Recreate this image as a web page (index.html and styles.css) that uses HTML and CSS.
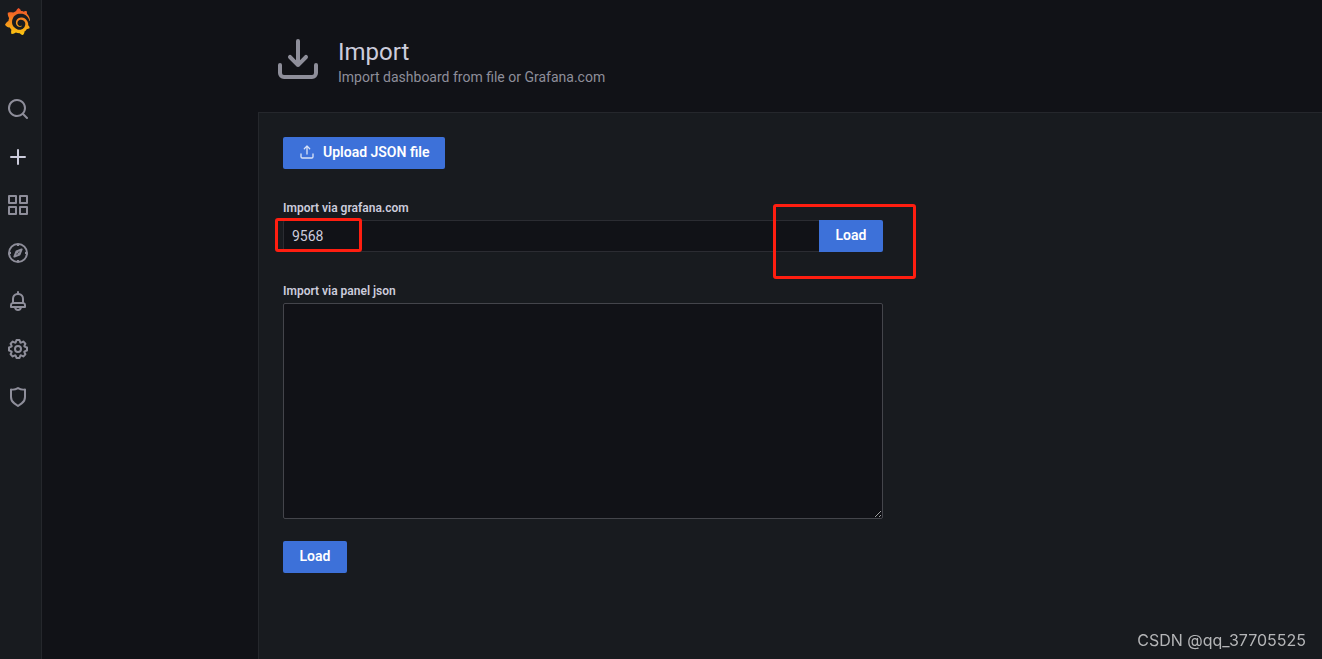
FILE: index.html
```html
<!DOCTYPE html>
<html lang="en">
<head>
<meta charset="utf-8">
<title>Import - Grafana</title>
<link rel="stylesheet" href="styles.css">
</head>
<body>
<div class="app">
  <nav class="sidebar" aria-label="Main menu">
    <a class="logo" href="#" aria-label="Home">
      <svg viewBox="0 0 24 24" width="27" height="27">
        <defs><linearGradient id="flame" x1="0" y1="1" x2="0" y2="0"><stop offset="0" stop-color="#fbc810"/><stop offset="1" stop-color="#f0502a"/></linearGradient></defs>
        <path fill="url(#flame)" d="M23.02 10.59a8.578 8.578 0 0 0-.862-3.034 8.911 8.911 0 0 0-1.789-2.445c.337-1.342-.413-2.505-.413-2.505-1.292-.08-2.113.4-2.416.62-.052-.02-.102-.044-.154-.064-.22-.089-.446-.172-.677-.247-.231-.073-.47-.14-.711-.197a9.867 9.867 0 0 0-.875-.161C14.557.753 12.94 0 12.94 0c-1.804 1.145-2.147 2.744-2.147 2.744l-.018.093c-.098.029-.2.057-.298.088-.138.042-.275.094-.413.143-.138.055-.275.107-.41.166a8.869 8.869 0 0 0-1.557.87l-.063-.029c-2.497-.955-4.716.195-4.716.195-.203 2.658.996 4.33 1.235 4.636a11.608 11.608 0 0 0-.607 2.635C1.636 12.677.953 15.014.953 15.014c1.926 2.214 4.171 2.351 4.171 2.351.003-.002.006-.002.006-.005.285.509.615.994.986 1.446.156.19.32.371.488.548-.704 2.009.099 3.68.099 3.68 2.144.08 3.553-.937 3.849-1.173a9.784 9.784 0 0 0 3.164.501h.08l.055-.003.107-.002.103-.005.003.002c1.01 1.44 2.788 1.646 2.788 1.646 1.264-1.332 1.337-2.653 1.337-2.94v-.058c0-.02-.003-.039-.003-.06.265-.187.52-.387.758-.6a7.875 7.875 0 0 0 1.415-1.7c1.43.083 2.437-.885 2.437-.885-.236-1.49-1.085-2.216-1.264-2.354l-.018-.013-.016-.013a.217.217 0 0 1-.031-.02c.008-.092.016-.18.02-.27.011-.162.016-.323.016-.48v-.253l-.005-.098-.008-.135a1.891 1.891 0 0 0-.01-.13c-.003-.042-.008-.083-.013-.125l-.016-.124-.018-.122a6.215 6.215 0 0 0-2.032-3.73 6.015 6.015 0 0 0-3.222-1.46 6.292 6.292 0 0 0-.85-.048l-.107.002h-.063l-.044.003-.104.008a4.777 4.777 0 0 0-3.335 1.695c-.332.4-.592.84-.768 1.297a4.594 4.594 0 0 0-.312 1.817l.003.091c.005.055.007.11.013.164a3.615 3.615 0 0 0 .698 1.82 3.53 3.53 0 0 0 1.827 1.282c.33.098.66.14.971.137.039 0 .078 0 .114-.002l.063-.003c.02 0 .041-.003.062-.003.034-.002.065-.007.099-.01.007 0 .018-.003.028-.003l.031-.005.06-.008a1.18 1.18 0 0 0 .112-.02c.036-.008.072-.013.109-.024a2.634 2.634 0 0 0 .914-.415c.028-.02.056-.041.085-.065a.248.248 0 0 0 .039-.35.244.244 0 0 0-.309-.06l-.078.042c-.09.044-.184.083-.283.116a2.476 2.476 0 0 1-.475.096c-.028.003-.054.006-.083.006l-.083.002c-.026 0-.054 0-.08-.002l-.102-.006h-.012l-.024.006c-.016-.003-.031-.003-.044-.006-.031-.002-.06-.007-.091-.01a2.59 2.59 0 0 1-.724-.213 2.557 2.557 0 0 1-.667-.438 2.52 2.52 0 0 1-.805-1.475 2.306 2.306 0 0 1-.029-.444l.006-.122v-.023l.002-.031c.003-.021.003-.04.005-.06a3.163 3.163 0 0 1 1.352-2.29 3.12 3.12 0 0 1 .937-.43 2.946 2.946 0 0 1 .776-.101h.06l.07.002.045.003h.026l.07.005a4.041 4.041 0 0 1 1.635.49 3.94 3.94 0 0 1 1.602 1.662 3.77 3.77 0 0 1 .397 1.414l.005.076.003.075c.002.026.002.05.002.075 0 .024.003.052 0 .07v.065l-.002.073-.008.174a6.195 6.195 0 0 1-.08.639 5.1 5.1 0 0 1-.267.927 5.31 5.31 0 0 1-.624 1.13 5.052 5.052 0 0 1-3.237 2.014 4.82 4.82 0 0 1-.649.066l-.039.003h-.287a6.607 6.607 0 0 1-1.716-.265 6.776 6.776 0 0 1-3.4-2.274 6.75 6.75 0 0 1-.746-1.15 6.616 6.616 0 0 1-.714-2.596l-.005-.083-.002-.02v-.056l-.003-.073v-.096l-.003-.104v-.07l.003-.163c.008-.22.026-.45.054-.678a8.707 8.707 0 0 1 .28-1.355c.128-.444.286-.872.473-1.277a7.04 7.04 0 0 1 1.456-2.1 5.925 5.925 0 0 1 .953-.763c.169-.111.343-.213.524-.306.089-.05.182-.091.273-.135.047-.02.093-.042.138-.062a7.177 7.177 0 0 1 .714-.267l.145-.045c.049-.015.098-.026.148-.041.098-.029.197-.052.296-.076.049-.013.1-.02.15-.033l.15-.032.151-.028.076-.013.075-.01.153-.024c.057-.01.114-.013.171-.023l.169-.021c.036-.003.073-.008.106-.01l.073-.008.036-.003.042-.002c.057-.003.114-.008.171-.01l.086-.006h.023l.037-.003.145-.007a7.999 7.999 0 0 1 1.708.125 7.917 7.917 0 0 1 2.048.68 8.253 8.253 0 0 1 1.672 1.09l.09.077.089.078c.06.052.114.107.171.159.057.052.112.106.166.16.052.055.107.107.159.164a8.671 8.671 0 0 1 1.41 1.978c.012.026.028.052.04.078l.04.078.075.156c.023.051.05.1.07.153l.065.15a8.848 8.848 0 0 1 .45 1.34.19.19 0 0 0 .201.142.186.186 0 0 0 .172-.184c.01-.246.002-.532-.024-.856z"/>
      </svg>
    </a>
    <a class="nav-item" href="#" aria-label="Search"><svg class="icon" viewBox="0 0 24 24"><path d="M21.71,20.29,18,16.61A9,9,0,1,0,16.61,18l3.68,3.68a1,1,0,0,0,1.42,0A1,1,0,0,0,21.71,20.29ZM11,18a7,7,0,1,1,7-7A7,7,0,0,1,11,18Z"/></svg></a>
    <a class="nav-item nav-item-active" href="#" aria-label="Create"><svg class="icon" viewBox="0 0 24 24"><path d="M19,11H13V5a1,1,0,0,0-2,0v6H5a1,1,0,0,0,0,2h6v6a1,1,0,0,0,2,0V13h6a1,1,0,0,0,0-2Z"/></svg></a>
    <a class="nav-item" href="#" aria-label="Dashboards"><svg class="icon icon-line" viewBox="0 0 24 24"><rect x="3" y="3" width="7" height="7"/><rect x="14" y="3" width="7" height="7"/><rect x="3" y="14" width="7" height="7"/><rect x="14" y="14" width="7" height="7"/></svg></a>
    <a class="nav-item" href="#" aria-label="Explore"><svg class="icon icon-line" viewBox="0 0 24 24"><circle cx="12" cy="12" r="9"/><path d="M12 3v2M12 19v2M3 12h2M19 12h2M15.6 8.4l-5.1 2.1-2.1 5.1 5.1-2.1zM11.5 12.5l1-1"/></svg></a>
    <a class="nav-item" href="#" aria-label="Alerting"><svg class="icon" viewBox="0 0 24 24"><path d="M18,13.18V10a6,6,0,0,0-5-5.91V3a1,1,0,0,0-2,0V4.09A6,6,0,0,0,6,10v3.18A3,3,0,0,0,4,16v2a1,1,0,0,0,1,1H8.14a4,4,0,0,0,7.72,0H19a1,1,0,0,0,1-1V16A3,3,0,0,0,18,13.18ZM8,10a4,4,0,0,1,8,0v3H8Zm4,10a2,2,0,0,1-1.72-1h3.44A2,2,0,0,1,12,20Zm6-3H6V16a1,1,0,0,1,1-1H17a1,1,0,0,1,1,1Z"/></svg></a>
    <a class="nav-item" href="#" aria-label="Configuration"><svg class="icon" viewBox="0 0 24 24"><path d="M21.32,9.55l-1.89-.63.89-1.78A1,1,0,0,0,20.13,6L18,3.87a1,1,0,0,0-1.15-.19l-1.78.89-.63-1.89A1,1,0,0,0,13.5,2h-3a1,1,0,0,0-.95.68L8.92,4.57,7.14,3.68A1,1,0,0,0,6,3.87L3.87,6a1,1,0,0,0-.19,1.15l.89,1.78-1.89.63A1,1,0,0,0,2,10.5v3a1,1,0,0,0,.68.95l1.89.63-.89,1.78A1,1,0,0,0,3.87,18L6,20.13a1,1,0,0,0,1.15.19l1.78-.89.63,1.89a1,1,0,0,0,.95.68h3a1,1,0,0,0,.95-.68l.63-1.89,1.78.89A1,1,0,0,0,18,20.13L20.13,18a1,1,0,0,0,.19-1.15l-.89-1.78,1.89-.63A1,1,0,0,0,22,13.5v-3A1,1,0,0,0,21.32,9.55ZM20,12.78l-1.2.4A2,2,0,0,0,17.64,16l.57,1.14-1.1,1.1L16,17.64a2,2,0,0,0-2.79,1.16l-.4,1.2H11.22l-.4-1.2A2,2,0,0,0,8,17.64l-1.14.57-1.1-1.1L6.36,16A2,2,0,0,0,5.2,13.18L4,12.78V11.22l1.2-.4A2,2,0,0,0,6.36,8L5.79,6.89l1.1-1.1L8,6.36A2,2,0,0,0,10.82,5.2l.4-1.2h1.56l.4,1.2A2,2,0,0,0,16,6.36l1.14-.57,1.1,1.1L17.64,8a2,2,0,0,0,1.16,2.79l1.2.4ZM12,8a4,4,0,1,0,4,4A4,4,0,0,0,12,8Zm0,6a2,2,0,1,1,2-2A2,2,0,0,1,12,14Z"/></svg></a>
    <a class="nav-item" href="#" aria-label="Server Admin"><svg class="icon" viewBox="0 0 24 24"><path d="M19.63,3.65a1,1,0,0,0-.84-.2,8,8,0,0,1-6.22-1.27,1,1,0,0,0-1.14,0A8,8,0,0,1,5.21,3.45a1,1,0,0,0-.84.2A1,1,0,0,0,4,4.43v7.45a9,9,0,0,0,3.77,7.33l3.65,2.6a1,1,0,0,0,1.16,0l3.65-2.6A9,9,0,0,0,20,11.88V4.43A1,1,0,0,0,19.63,3.65ZM18,11.88a7,7,0,0,1-2.93,5.7L12,19.77,8.93,17.58A7,7,0,0,1,6,11.88V5.58a10,10,0,0,0,6-1.39,10,10,0,0,0,6,1.39Z"/></svg></a>
  </nav>
  <main class="page">
    <header class="page-header">
      <svg class="page-icon" viewBox="0 0 24 24"><path d="M21,14a1,1,0,0,0-1,1v4a1,1,0,0,1-1,1H5a1,1,0,0,1-1-1V15a1,1,0,0,0-2,0v4a3,3,0,0,0,3,3H19a3,3,0,0,0,3-3V15A1,1,0,0,0,21,14Zm-9.71,1.71a1,1,0,0,0,.33.21.94.94,0,0,0,.76,0,1,1,0,0,0,.33-.21l4-4a1,1,0,0,0-1.42-1.42L13,12.59V3a1,1,0,0,0-2,0v9.59l-2.29-2.3a1,1,0,1,0-1.42,1.42Z"/></svg>
      <div>
        <h1 class="page-title">Import</h1>
        <p class="page-subtitle">Import dashboard from file or Grafana.com</p>
      </div>
    </header>
    <section class="panel">
      <button class="button button-upload" type="button">
        <svg class="button-icon" viewBox="0 0 24 24"><path d="M8.71,7.71,11,5.41V15a1,1,0,0,0,2,0V5.41l2.29,2.3a1,1,0,0,0,1.42,0,1,1,0,0,0,0-1.42l-4-4a1,1,0,0,0-.33-.21,1,1,0,0,0-.76,0,1,1,0,0,0-.33.21l-4,4A1,1,0,1,0,8.71,7.71ZM21,14a1,1,0,0,0-1,1v4a1,1,0,0,1-1,1H5a1,1,0,0,1-1-1V15a1,1,0,0,0-2,0v4a3,3,0,0,0,3,3H19a3,3,0,0,0,3-3V15A1,1,0,0,0,21,14Z"/></svg>
        Upload JSON file
      </button>
      <form class="field">
        <label class="label" for="dashboard-id">Import via grafana.com</label>
        <div class="input-row">
          <input class="input" id="dashboard-id" type="text" value="9568">
          <button class="button button-attached" type="button">Load</button>
          <span class="mark mark-id"></span>
          <span class="mark mark-load"></span>
        </div>
      </form>
      <form class="field">
        <label class="label" for="panel-json">Import via panel json</label>
        <textarea class="textarea" id="panel-json" rows="10"></textarea>
        <button class="button" type="button">Load</button>
      </form>
    </section>
  </main>
</div>
<div class="watermark">CSDN @qq_37705525</div>
</body>
</html>
```
FILE: styles.css
```css
* { box-sizing: border-box; }

body {
  margin: 0;
  background: #111217;
  color: #ccccdc;
  font-family: Roboto, "Liberation Sans", sans-serif;
  font-size: 14px;
  line-height: 22px;
}

.app { display: flex; min-height: 100vh; }

.sidebar {
  flex: none;
  display: flex;
  flex-direction: column;
  width: 42px;
  padding-right: 5px;
  background: #181b1f;
  border-right: 1px solid #25272c;
}

.logo {
  display: flex;
  justify-content: center;
  padding: 8px 2px 0 0;
  height: 85px;
}

.nav-item {
  display: flex;
  align-items: center;
  justify-content: center;
  height: 48px;
  color: #8e8e9a;
}

.nav-item-active { color: #ccccdc; }

.icon { width: 24px; height: 24px; fill: currentColor; }
.icon-line { fill: none; stroke: currentColor; stroke-width: 2; stroke-linejoin: round; }

.page {
  flex: 1;
  display: flex;
  flex-direction: column;
  margin-left: 216px;
}

.page-header {
  display: flex;
  gap: 16px;
  padding: 35px 16px 24px;
}

.page-icon { flex: none; width: 48px; height: 48px; fill: #8e8e9a; }

.page-title { margin: 3px 0 0; font-size: 24px; font-weight: 400; line-height: 28px; }
.page-subtitle { margin: 0; color: #8e8e9a; }

.panel {
  flex: 1;
  padding: 24px;
  background: #181b1f;
  border: solid #25272c;
  border-width: 1px 0 0 1px;
}

.button {
  display: inline-flex;
  align-items: center;
  justify-content: center;
  min-width: 64px;
  height: 32px;
  padding: 0 16px 2px;
  border: 0;
  border-radius: 2px;
  background: #3d71d9;
  color: #fff;
  font: 600 14px/22px Roboto, "Liberation Sans", sans-serif;
}

.button-upload { gap: 8px; margin-bottom: 32px; }
.button-icon { width: 16px; height: 16px; fill: #fff; opacity: .8; }
.button-attached { border-radius: 0 2px 2px 0; }

.field { max-width: 600px; margin-bottom: 32px; }

.label {
  display: block;
  margin-bottom: 4px;
  font-size: 12px;
  font-weight: 600;
  line-height: 15px;
}

.input-row { position: relative; display: flex; }

.input, .textarea {
  background: #111217;
  color: #ccccdc;
  font: 14px/22px Roboto, "Liberation Sans", sans-serif;
  outline: 0;
}

.input {
  flex: 1;
  min-width: 0;
  height: 32px;
  padding: 0 8px;
  border: 1px solid #2b2c32;
  border-right: 0;
  border-radius: 2px 0 0 2px;
}

.textarea {
  display: block;
  width: 100%;
  height: 216px;
  margin-bottom: 22px;
  padding: 4px 8px;
  border: 1px solid #44454b;
  border-radius: 2px;
}

/* Highlight frames drawn over the form */
.mark {
  position: absolute;
  border: 3px solid #ff1e10;
  border-radius: 3px;
  pointer-events: none;
}

.mark-id { left: -8px; top: -2px; width: 87px; height: 34px; }
.mark-load { right: -33px; top: -16px; width: 143px; height: 75px; }

.watermark {
  position: fixed;
  right: 16px;
  bottom: 8px;
  color: #b4b5b7;
  font: 16px/22px Inter, "Liberation Sans", sans-serif;
}
```
